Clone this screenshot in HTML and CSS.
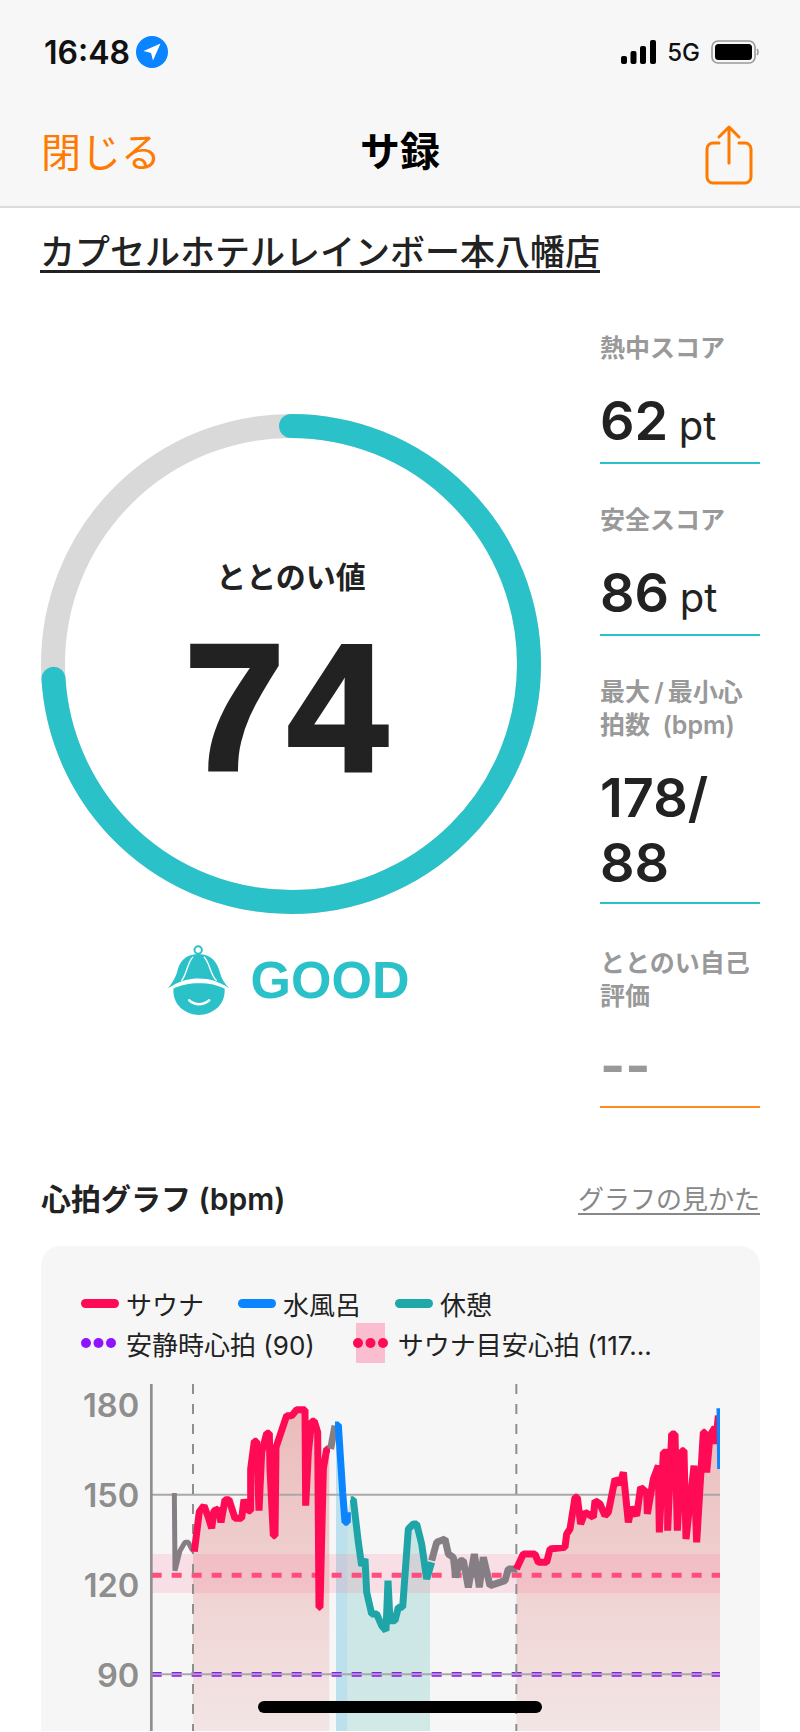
FILE: index.html
```html
<!DOCTYPE html>
<html lang="ja">
<head>
  <meta charset="UTF-8" />
  <title>サ録</title>
  <meta name="viewport" content="width=device-width, initial-scale=1" />
  <link rel="stylesheet" href="styles.css">
</head>
<body>
  <header class="top">
    <div class="status">
      <span class="time">16:48</span>
      <svg class="loc" width="32" height="32" viewBox="0 0 32 32">
        <circle cx="16" cy="16" r="16" fill="#0a84ff"/>
        <path d="M24.5 7.5 L7.5 15 L15 17 L17 24.5 Z" fill="#fff"/>
      </svg>
      <span class="status-right">
        <svg width="35" height="24" viewBox="0 0 35 24">
          <rect x="0" y="16" width="6" height="8" rx="2"/>
          <rect x="9.5" y="11" width="6" height="13" rx="2"/>
          <rect x="19" y="6" width="6" height="18" rx="2"/>
          <rect x="29" y="0" width="6" height="24" rx="2"/>
        </svg>
        <span class="net">5G</span>
        <svg width="48" height="24" viewBox="0 0 48 24">
          <rect x="1" y="1" width="43" height="22" rx="6" fill="none" stroke="#999" stroke-width="1.6"/>
          <rect x="4" y="4" width="37" height="16" rx="3.5"/>
          <path d="M46 9 q2 3 0 6" fill="none" stroke="#999" stroke-width="1.6"/>
        </svg>
      </span>
    </div>
    <nav class="nav">
      <span class="close">閉じる</span>
      <span class="nav-title">サ録</span>
      <svg class="share" width="48" height="60" viewBox="0 0 48 60" fill="none" stroke="#ff7a00" stroke-width="3" stroke-linecap="round" stroke-linejoin="round">
        <path d="M14 18 H8 a6 6 0 0 0 -6 6 V52 a6 6 0 0 0 6 6 H40 a6 6 0 0 0 6 -6 V24 a6 6 0 0 0 -6 -6 H34"/>
        <path d="M24 38 V2 M14 12 L24 2 L34 12"/>
      </svg>
    </nav>
  </header>

  <h1 class="shop"><span>カプセルホテルレインボー本八幡店</span></h1>

  <main class="summary">
    <div class="ring-col">
      <div class="ring">
        <svg width="500" height="500" viewBox="0 0 500 500">
          <circle class="ring-track" cx="250" cy="250" r="238"/>
          <circle class="ring-value" cx="250" cy="250" r="238" pathLength="100" transform="rotate(-90 250 250)"/>
        </svg>
        <div class="ring-text">
          <div class="ring-label">ととのい値</div>
          <div class="ring-num">74</div>
        </div>
      </div>
      <div class="grade">
        <svg width="62" height="72" viewBox="115 70 185 215">
          <circle cx="205" cy="88" r="11" fill="none" stroke="#2bc1c9" stroke-width="6"/>
          <path d="M205 100 C165 100 148 125 142 155 C135 175 125 190 115 202 C150 180 175 173 207 173 C240 173 265 182 298 202 C285 190 275 175 270 155 C262 125 245 100 205 100 Z" fill="#2bc1c9"/>
          <path d="M190 108 C172 125 172 160 155 180 M222 108 C240 125 240 160 260 180" fill="none" stroke="#fff" stroke-width="4"/>
          <path d="M131 204 C165 183 245 180 284 204 C287 255 245 282 207 282 C170 282 128 255 131 204 Z" fill="#2bc1c9"/>
          <path d="M178 238 Q207 262 238 238" fill="none" stroke="#fff" stroke-width="7" stroke-linecap="round"/>
        </svg>
        <span class="grade-text">GOOD</span>
      </div>
    </div>

    <div class="scores">
      <div class="score">
        <div class="score-label">熱中スコア</div>
        <div class="score-value">62 <small>pt</small></div>
      </div>
      <div class="score">
        <div class="score-label">安全スコア</div>
        <div class="score-value">86 <small>pt</small></div>
      </div>
      <div class="score score-tall">
        <div class="score-label">最大&#8201;/&#8201;最小心<br>拍数&#8194;(bpm)</div>
        <div class="score-value">178/ 88</div>
      </div>
      <div class="score score-self">
        <div class="score-label">ととのい自己評価</div>
        <div class="score-value score-none">--</div>
      </div>
    </div>
  </main>

  <section class="graph">
    <div class="graph-head">
      <h2>心拍グラフ (bpm)</h2>
      <span class="graph-link">グラフの見かた</span>
    </div>
    <div class="graph-card">
      <div class="legend">
        <div class="legend-row legend-row-tight">
          <span class="legend-item"><i class="swatch red"></i>サウナ</span>
          <span class="legend-item"><i class="swatch blue"></i>水風呂</span>
          <span class="legend-item"><i class="swatch teal"></i>休憩</span>
        </div>
        <div class="legend-row">
          <span class="legend-item">
            <svg class="dots" width="35" height="40" viewBox="0 0 35 40" fill="#9013fe"><circle cx="5" cy="20" r="5"/><circle cx="17.5" cy="20" r="5"/><circle cx="30" cy="20" r="5"/></svg>
            安静時心拍 (90)
          </span>
          <span class="legend-item">
            <svg class="dots" width="35" height="40" viewBox="0 0 35 40" fill="#ff0a54"><rect x="3" width="29" height="40" fill="#fbbdd0"/><circle cx="5" cy="20" r="5"/><circle cx="17.5" cy="20" r="5"/><circle cx="30" cy="20" r="5"/></svg>
            サウナ目安心拍 (117...
          </span>
        </div>
      </div>

      <svg class="chart" width="660" height="362" viewBox="0 0 1980 1086">
        <defs>
          <linearGradient id="fillRed" gradientUnits="userSpaceOnUse" x1="0" y1="100" x2="0" y2="1086">
            <stop offset="0" stop-color="#d84f4f" stop-opacity=".36"/>
            <stop offset="1" stop-color="#d84f4f" stop-opacity=".1"/>
          </linearGradient>
          <linearGradient id="fillTeal" gradientUnits="userSpaceOnUse" x1="0" y1="400" x2="0" y2="1086">
            <stop offset="0" stop-color="#1fa8a0" stop-opacity=".22"/>
            <stop offset="1" stop-color="#1fa8a0" stop-opacity=".17"/>
          </linearGradient>
        </defs>

        <g class="axis-text">
          <text x="238" y="143">180</text>
          <text x="238" y="413">150</text>
          <text x="238" y="683">120</text>
          <text x="238" y="953">90</text>
        </g>

        <polygon fill="url(#fillRed)" points="399,548 418,428 432,410 445,445 455,478 462,425 475,420 483,460 495,392 507,392 525,448 545,448 552,392 565,425 572,425 572,300 583,217 590,217 597,425 605,250 620,193 628,193 630,300 640,500 645,500 648,235 680,140 695,140 710,122 735,122 737,410 745,250 755,157 763,157 773,190 777,715 780,715 790,300 800,240 808,240 808,1086 399,1086"/>
        <polygon fill="#a9d8ea" opacity=".75" points="828,168 835,168 848,370 855,460 862,460 862,1086 828,1086"/>
        <polygon fill="url(#fillTeal)" points="862,430 872,392 880,392 895,520 905,590 915,570 920,670 935,735 950,735 965,770 978,785 984,635 990,755 1005,755 1015,715 1028,715 1045,480 1060,465 1070,465 1085,525 1098,630 1110,590 1110,1086 862,1086"/>
        <polygon fill="url(#fillRed)" points="1369,600 1390,555 1425,555 1435,580 1460,580 1470,540 1515,535 1520,495 1530,480 1545,385 1552,385 1562,465 1575,430 1600,445 1605,395 1620,405 1635,440 1645,430 1665,330 1680,345 1690,310 1705,460 1715,415 1730,440 1742,355 1760,370 1762,435 1780,330 1795,290 1798,490 1810,250 1823,250 1823,485 1835,195 1845,195 1852,485 1865,245 1872,245 1878,510 1902,290 1910,520 1930,190 1935,190 1940,310 1950,200 1965,175 1967,225 1980,140 1980,1086 1369,1086"/>

        <rect x="275" y="555" width="1705" height="117" fill="#ff6e96" opacity=".17"/>
        <line class="goal" x1="275" y1="619" x2="1980" y2="619"/>
        <line class="rest" x1="275" y1="916" x2="1980" y2="916"/>
        <line class="grid" x1="275" y1="377" x2="1980" y2="377"/>
        <line class="grid" x1="275" y1="916" x2="1980" y2="916"/>
        <line class="axis" x1="274" y1="45" x2="274" y2="1086"/>
        <line class="mark" x1="399" y1="45" x2="399" y2="1086"/>
        <line class="mark" x1="1369" y1="45" x2="1369" y2="1086"/>

        <polyline class="hr gray thin" points="343,372 345,605 360,545 375,520 385,520 395,540 403,548"/>
        <polyline class="hr red" points="403,548 418,428 432,410 445,445 455,478 462,425 475,420 483,460 495,392 507,392 525,448 545,448 552,392 565,425 572,425 572,300 583,217 590,217 597,425 605,250 620,193 628,193 630,300 640,500 645,500 648,235 680,140 695,140 710,122 735,122 737,410 745,250 755,157 763,157 773,190 777,715 780,715 790,300 800,240 810,240"/>
        <polyline class="hr gray" points="812,240 825,170"/>
        <polyline class="hr blue" points="825,168 835,168 848,370 855,460 862,460 862,430"/>
        <polyline class="hr teal" points="872,392 880,392 895,520 905,590 915,570 920,670 935,735 950,735 965,770 978,785 984,635 990,755 1005,755 1015,715 1028,715 1045,480 1060,465 1070,465 1085,525 1100,630 1115,580"/>
        <polyline class="hr gray" points="1115,575 1130,520 1155,510 1165,555 1180,565 1187,625 1200,575 1210,575 1225,655 1243,555 1258,655 1270,565 1290,650 1335,635 1345,600 1369,600"/>
        <polyline class="hr red" points="1369,600 1390,555 1425,555 1435,580 1460,580 1470,540 1515,535 1520,495 1530,480 1545,385 1552,385 1562,465 1575,430 1600,445 1605,395 1620,405 1635,440 1645,430 1665,330 1680,345 1690,310 1705,460 1715,415 1730,440 1742,355 1760,370 1762,435 1780,330 1795,290 1798,490 1810,250 1823,250 1823,485 1835,195 1845,195 1852,485 1865,245 1872,245 1878,510 1902,290 1910,520 1930,190 1935,190 1940,310 1950,200 1965,175 1967,225 1975,140"/>
        <polyline class="hr blue thin" points="1977,118 1979,300"/>
      </svg>
    </div>
  </section>

  <div class="home-bar"></div>
</body>
</html>
```

FILE: styles.css
```css
html, body {
  margin: 0;
  height: 1732px;
  overflow: hidden;
}
body {
  position: relative;
  background: #fff;
  color: #222;
  font-family: Inter, "Noto Sans CJK JP", sans-serif;
}

/* top bar */
.top {
  height: 206px;
  background: #f7f7f7;
  border-bottom: 2px solid #dcdcdc;
}
.status {
  display: flex;
  align-items: center;
  height: 32px;
  padding: 36px 41px 0 44px;
}
.time {
  font-size: 32px;
  font-weight: 600;
  color: #111;
}
.loc {
  margin-left: 6px;
}
.status-right {
  display: flex;
  align-items: center;
  margin-left: auto;
  gap: 11px;
}
.net {
  font-size: 24px;
  font-weight: 500;
  color: #111;
}
.nav {
  display: flex;
  align-items: center;
  justify-content: space-between;
  position: relative;
  height: 60px;
  margin-top: 57px;
  padding: 0 47px 0 41px;
}
.close {
  margin-bottom: 10px;
  font-size: 40px;
  color: #ff7a00;
}
.nav-title {
  position: absolute;
  left: 0;
  right: 0;
  margin-bottom: 12px;
  text-align: center;
  font-size: 40px;
  font-weight: 700;
  color: #000;
  pointer-events: none;
}

.shop {
  margin: 0;
  padding: 22px 0 0 40px;
  font-size: 35px;
  line-height: 44px;
  font-weight: 500;
}
.shop span {
  text-decoration: underline;
  text-decoration-thickness: 3px;
  text-underline-offset: 5px;
}

/* ring + scores */
.summary {
  display: flex;
  gap: 59px;
  padding: 58px 40px 0 41px;
}
.ring-col {
  width: 500px;
  padding-top: 82px;
}
.ring {
  position: relative;
  width: 500px;
  height: 500px;
}
.ring-track,
.ring-value {
  fill: none;
  stroke-width: 24;
}
.ring-track {
  stroke: #d9d9d9;
}
.ring-value {
  stroke: #2bc1c9;
  stroke-linecap: round;
  stroke-dasharray: 74 26;
}
.ring-text {
  position: absolute;
  top: 0;
  left: 0;
  right: 0;
  text-align: center;
}
.ring-label {
  margin-top: 142px;
  font-size: 30px;
  line-height: 42px;
  font-weight: 600;
}
.ring-num {
  margin-top: 17px;
  padding-right: 7px;
  font-family: "Liberation Sans", sans-serif;
  font-size: 180px;
  line-height: 186px;
  font-weight: 700;
  letter-spacing: 3px;
  -webkit-text-stroke: 4px #222;
}
.grade {
  display: flex;
  align-items: center;
  justify-content: center;
  gap: 21px;
  margin-top: 30px;
  padding-right: 5px;
}
.grade-text {
  font-family: "Liberation Sans", sans-serif;
  font-size: 52px;
  font-weight: 700;
  color: #2bc1c9;
}

.scores {
  width: 160px;
}
.score {
  margin-bottom: 40px;
  padding-bottom: 4px;
  border-bottom: 2px solid #2bc1c9;
}
.score-tall {
  padding-bottom: 7px;
}
.score-self {
  margin-bottom: 0;
  padding-top: 3px;
  padding-bottom: 8px;
  border-bottom-color: #ff8a1f;
}
.score-label {
  font-size: 25px;
  line-height: 33px;
  font-weight: 600;
  color: #999;
}
.score-value {
  margin-top: 23px;
  font-size: 54px;
  line-height: 65px;
  font-weight: 600;
}
.score-value small {
  margin-left: -3px;
  font-size: 40px;
  font-weight: 400;
}
.score-none {
  margin-top: 20px;
  color: #999;
  font-weight: 700;
}

/* graph */
.graph {
  margin: 69px 40px 0 41px;
}
.graph-head {
  display: flex;
  align-items: center;
  justify-content: space-between;
  height: 40px;
}
.graph-head h2 {
  margin: 0;
  font-size: 30px;
  font-weight: 600;
}
.graph-link {
  font-size: 26px;
  color: #888;
  text-decoration: underline;
  text-underline-offset: 4px;
}
.graph-card {
  margin-top: 29px;
  padding: 37px 0 0 19px;
  background: #f6f6f6;
  border-radius: 20px 20px 0 0;
}
.legend {
  margin-left: 21px;
}
.legend-row {
  display: flex;
  gap: 38px;
  height: 40px;
}
.legend-row-tight {
  gap: 34px;
}
.legend-item {
  display: flex;
  align-items: center;
  font-size: 26px;
  white-space: nowrap;
}
.swatch {
  width: 38px;
  height: 9px;
  margin-right: 7px;
  border-radius: 5px;
}
.swatch.red { background: #ff0a54; }
.swatch.blue { background: #0a84ff; }
.swatch.teal { background: #1fa8a8; }
.dots {
  margin-right: 10px;
}
.chart {
  display: block;
  margin-top: 6px;
}
.axis-text text {
  font-size: 98px;
  font-weight: 600;
  fill: #8e8e8e;
  text-anchor: end;
}
.grid {
  stroke: #a8a8a8;
  stroke-width: 6;
}
.axis {
  stroke: #8e8e8e;
  stroke-width: 8;
}
.mark {
  stroke: #8e8e8e;
  stroke-width: 6;
  stroke-dasharray: 30 30;
}
.goal {
  stroke: #ff4d7d;
  stroke-width: 15;
  stroke-dasharray: 30 30;
}
.rest {
  stroke: #9013fe;
  stroke-width: 14;
  stroke-dasharray: 30 30;
}
.hr {
  fill: none;
  stroke-width: 21;
  stroke-linejoin: bevel;
}
.hr.thin { stroke-width: 15; }
.hr.red { stroke: #ff0a54; }
.hr.blue { stroke: #0a84ff; }
.hr.teal { stroke: #1fa5a8; }
.hr.gray { stroke: #857f85; }

.home-bar {
  position: absolute;
  left: 258px;
  top: 1701px;
  width: 284px;
  height: 12px;
  border-radius: 6px;
  background: #000;
}
```
